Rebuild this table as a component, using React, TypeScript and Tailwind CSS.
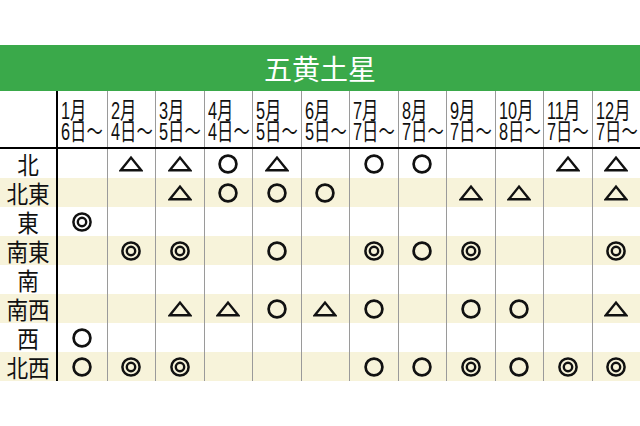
import React from "react"

type Mark = "" | "o" | "d" | "t"

const months = [
  ["1月", "6日〜"],
  ["2月", "4日〜"],
  ["3月", "5日〜"],
  ["4月", "4日〜"],
  ["5月", "5日〜"],
  ["6月", "5日〜"],
  ["7月", "7日〜"],
  ["8月", "7日〜"],
  ["9月", "7日〜"],
  ["10月", "8日〜"],
  ["11月", "7日〜"],
  ["12月", "7日〜"],
]

// o = ○, d = ◎, t = △
const rows: { label: string; marks: Mark[] }[] = [
  { label: "北", marks: ["", "t", "t", "o", "t", "", "o", "o", "", "", "t", "t"] },
  { label: "北東", marks: ["", "", "t", "o", "o", "o", "", "", "t", "t", "", "t"] },
  { label: "東", marks: ["d", "", "", "", "", "", "", "", "", "", "", ""] },
  { label: "南東", marks: ["", "d", "d", "", "o", "", "d", "o", "d", "", "", "d"] },
  { label: "南", marks: ["", "", "", "", "", "", "", "", "", "", "", ""] },
  { label: "南西", marks: ["", "", "t", "t", "o", "t", "o", "", "o", "o", "", "t"] },
  { label: "西", marks: ["o", "", "", "", "", "", "", "", "", "", "", ""] },
  { label: "北西", marks: ["o", "d", "d", "", "", "", "o", "o", "d", "o", "d", "d"] },
]

const Symbol = ({ mark }: { mark: Mark }) => {
  if (mark === "o")
    return (
      <svg width="24" height="24" viewBox="0 0 24 24">
        <circle cx="12" cy="12" r="8.4" fill="none" stroke="#111" strokeWidth="2.7" />
      </svg>
    )
  if (mark === "d")
    return (
      <svg width="24" height="24" viewBox="0 0 24 24">
        <circle cx="12" cy="12" r="8.6" fill="none" stroke="#111" strokeWidth="2.5" />
        <circle cx="12" cy="12" r="4.2" fill="none" stroke="#111" strokeWidth="2.4" />
      </svg>
    )
  if (mark === "t")
    return (
      <svg width="24" height="18" viewBox="0 0 24 18">
        <polygon points="1.8,15.3 22.2,15.3 12,2.6" fill="none" stroke="#111" strokeWidth="2.4" />
      </svg>
    )
  return null
}

const gridCols = "grid grid-cols-[58px_repeat(12,minmax(0,1fr))]"

export default function App() {
  return (
    <div className="w-[640px] h-[426px] bg-white font-['Liberation_Sans','Noto_Sans_CJK_JP',sans-serif] text-[#111]">
      <div className="h-[45px]" />
      <div className="h-[46px] bg-[#3aa94a] flex items-center justify-center">
        <span className="text-white text-[28px] leading-none font-['Noto_Sans_CJK_JP',sans-serif]">五黄土星</span>
      </div>

      {/* header row */}
      <div className={`${gridCols} h-[58px] border-b-2 border-black`}>
        <div className="border-r-2 border-black" />
        {months.map((m, i) => (
          <div
            key={m[0]}
            className={`${i > 0 ? "border-l border-[#9a9a9a]" : ""} pl-[3px] pt-[9px] overflow-hidden whitespace-nowrap`}
          >
            <div className="inline-block origin-left scale-x-[0.68] text-[24px] leading-[21px]">
              <div>{m[0]}</div>
              <div>{m[1]}</div>
            </div>
          </div>
        ))}
      </div>

      {rows.map((r, ri) => (
        <div key={r.label} className={`${gridCols} h-[29px] ${ri % 2 === 1 ? "bg-[#f7f3da]" : "bg-white"}`}>
          <div className="border-r-2 border-black flex items-center justify-center whitespace-nowrap">
            <span className="inline-block scale-x-[0.9] text-[24px] leading-none font-['Noto_Sans_CJK_JP',sans-serif]">
              {r.label}
            </span>
          </div>
          {r.marks.map((mk, i) => (
            <div
              key={i}
              className={`${i > 0 ? "border-l border-[#9a9a9a]" : ""} flex items-center justify-center`}
            >
              <Symbol mark={mk} />
            </div>
          ))}
        </div>
      ))}
    </div>
  )
}
